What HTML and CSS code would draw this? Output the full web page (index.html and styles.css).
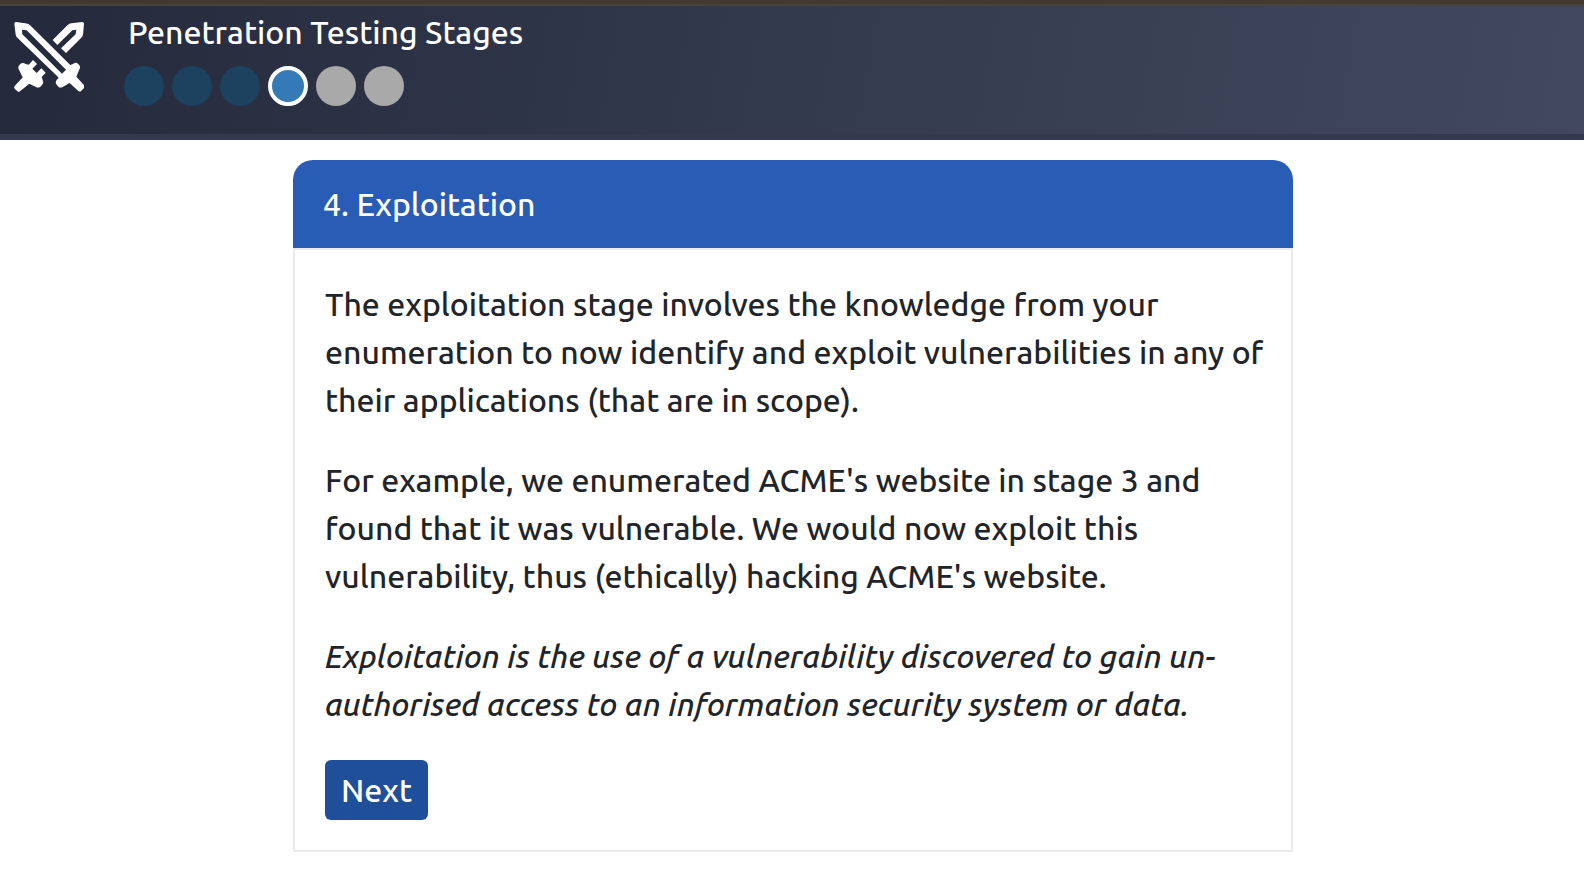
FILE: index.html
```html
<!DOCTYPE html>
<html lang="en">
<head>
<meta charset="utf-8">
<title>Penetration Testing Stages</title>
<link rel="stylesheet" href="styles.css">
</head>
<body>
<header class="banner">
  <svg class="logo" viewBox="42 66 210 210" aria-hidden="true">
    <path fill-rule="evenodd" d="M43 71Q43 66 48 66L76 70Q86 71 92 77L207 191L211 195L220 191Q228 186 234 191L239 197Q242 203 237 211L229 230L251 254Q254 259 252 264L244 272Q240 277 235 273L209 249L188 261Q181 265 175 260L169 253Q165 247 170 240L176 233L172 229L52 113Q48 110 47 104ZM66 89L67 103L186 221L198 209L80 91Z"/>
    <path d="M158 120L203 75Q208 71 214 70L247 66Q252 66 252 71L249 104Q248 110 243 114L198 159L183 145L227 103L229 89L217 91L172 135Z"/>
    <path d="M99 180L111 192L97 206L110 219L124 205L137 218L125 231L129 243Q131 250 126 255L121 260Q116 264 109 262L88 251L60 274Q56 277 52 274L44 266Q41 263 44 258L68 232L56 208Q53 200 58 195L64 190Q70 187 77 192L86 194Z"/>
  </svg>
  <div class="intro">
    <h1 class="title">Penetration Testing Stages</h1>
    <ol class="steps">
      <li class="step done"></li>
      <li class="step done"></li>
      <li class="step done"></li>
      <li class="step current" aria-current="step"></li>
      <li class="step"></li>
      <li class="step"></li>
    </ol>
  </div>
</header>
<main class="page">
  <section class="card">
    <h2 class="card-head">4. Exploitation</h2>
    <div class="card-body">
      <p>The exploitation stage involves the knowledge from your enumeration to now identify and exploit vulnerabilities in any of their applications (that are in scope).</p>
      <p>For example, we enumerated ACME's website in stage 3 and found that it was vulnerable. We would now exploit this vulnerability, thus (ethically) hacking ACME's website.</p>
      <p><em>Exploitation is the use of a vulnerability discovered to gain un-authorised access to an information security system or data.</em></p>
      <button class="next" type="button">Next</button>
    </div>
  </section>
</main>
</body>
</html>
```
FILE: styles.css
```css
* { box-sizing: border-box; }
body {
  margin: 0;
  background: #fff;
  color: #212529;
  font: 500 32px/48px Ubuntu, "Noto Sans", sans-serif;
}
.banner {
  display: flex;
  gap: 40px;
  padding: 4px 14px 28px;
  border-bottom: 6px solid #343950;
  background:
    linear-gradient(#45382f 4px, #47433f 4px, #47433f 6px, transparent 6px),
    linear-gradient(100deg, #25293c, #333a4d 50%, #42495f);
}
.logo {
  width: 70px;
  height: 70px;
  margin-top: 18px;
  fill: #fff;
}
.title {
  margin: 4px 0 10px;
  padding-left: 4px;
  font-size: 32px;
  font-weight: 500;
  color: #fff;
}
.steps {
  display: flex;
  gap: 8px;
  margin: 0;
  padding: 0;
  list-style: none;
}
.step {
  width: 40px;
  height: 40px;
  border-radius: 50%;
  background: #a9a9a9;
}
.done { background: #1d4260; }
.current {
  border: 4px solid #fff;
  background: #347ab7;
}
.page { padding: 20px 0 30px 2px; }
.card {
  max-width: 1000px;
  margin: 0 auto;
}
.card-head {
  margin: 0;
  padding: 20px 30px;
  border-radius: 20px 20px 0 0;
  background: #295cb5;
  color: #fff;
  font-size: 32px;
  font-weight: 500;
}
.card-body {
  padding: 30px 20px 30px 30px;
  border: 2px solid #ebebeb;
}
.card-body p { margin: 0 0 32px; }
.next {
  display: block;
  padding: 6px 16px;
  border: 0;
  border-radius: 6px;
  background: #1f4e9b;
  color: #fff;
  font: inherit;
}
```
